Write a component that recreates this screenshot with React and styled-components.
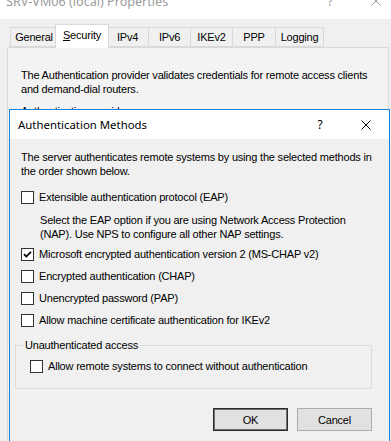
import React from "react";
import styled, { createGlobalStyle } from "styled-components";

const GlobalStyle = createGlobalStyle`
  html, body { margin: 0; padding: 0; background: #f0f0f0; overflow: hidden; }
  * { box-sizing: border-box; }
`;

const UI = `"Liberation Sans", Arial, sans-serif`;
const CAPTION = `"Noto Sans", "Open Sans", sans-serif`;

const Screen = styled.div`
  position: relative;
  width: 391px;
  height: 441px;
  overflow: hidden;
  background: #f0f0f0;
  font-family: ${UI};
  font-size: 11px;
  letter-spacing: -0.2px;
  color: #000;
`;

const BgWindow = styled.div`
  display: flex;
  flex-direction: column;
  height: 441px;
`;

const BgTitleBar = styled.div`
  display: flex;
  align-items: flex-start;
  height: 19px;
  background: #fff;
  padding-left: 6px;
  overflow: hidden;
`;

const TitleText = styled.div`
  font-family: ${CAPTION};
  font-size: ${(p) => p.$size || 11.5}px;
  letter-spacing: 0;
  line-height: 14px;
  color: ${(p) => (p.$inactive ? "#9b9b9b" : "#000")};
  margin-top: ${(p) => p.$offset || 0}px;
  white-space: nowrap;
`;

const Captions = styled.div`
  display: flex;
  margin-left: auto;
  margin-right: ${(p) => p.$right || 0}px;
  margin-top: ${(p) => p.$offset || 0}px;
  height: ${(p) => p.$height}px;
`;

const CaptionButton = styled.div`
  width: 46px;
  height: 100%;
  display: flex;
  align-items: center;
  justify-content: center;
  font-family: ${CAPTION};
  font-size: 12px;
  color: ${(p) => (p.$inactive ? "#9b9b9b" : "#000")};
`;

const TabStrip = styled.div`
  display: flex;
  align-items: flex-end;
  height: 23px;
  margin-top: 5px;
  padding-left: 10px;
  position: relative;
  z-index: 2;
`;

const Tab = styled.div`
  flex: 0 0 ${(p) => p.$w}px;
  height: ${(p) => (p.$active ? 24 : 20)}px;
  margin-left: ${(p) => p.$ml ?? -1}px;
  margin-bottom: ${(p) => (p.$active ? -1 : 0)}px;
  border: 1px solid #d9d9d9;
  border-bottom: ${(p) => (p.$active ? "none" : "1px solid #d9d9d9")};
  background: ${(p) => (p.$active ? "#fff" : "#f0f0f0")};
  position: relative;
  z-index: ${(p) => (p.$active ? 2 : 1)};
  display: flex;
  align-items: center;
  justify-content: center;
  padding-bottom: ${(p) => (p.$active ? 3 : 0)}px;
  line-height: 14px;
  white-space: nowrap;
`;

const Panel = styled.div`
  flex: 1;
  margin-left: 7px;
  width: 382px;
  border: 1px solid #d9d9d9;
  border-bottom: none;
  background: #f3f3f3;
  padding: 20px 0 0 13px;
  line-height: 14px;
  white-space: nowrap;
`;

const PanelLabel = styled.div`
  margin-top: 8px;
`;

const Dialog = styled.div`
  position: absolute;
  left: 9px;
  top: 109px;
  width: 381px;
  height: 345px;
  border: 1px solid #1c84d6;
  background: #f0f0f0;
  z-index: 5;
  display: flex;
  flex-direction: column;
`;

const DialogTitleBar = styled.div`
  display: flex;
  align-items: center;
  height: 29px;
  background: #fff;
  padding-left: 8px;
`;

const DialogBody = styled.div`
  padding: 11px 17px 0 11px;
  line-height: 14px;
  white-space: nowrap;
`;

const Para = styled.div`
  margin-top: ${(p) => p.$mt || 0}px;
  margin-left: ${(p) => p.$ml || 0}px;
`;

const CheckRow = styled.div`
  display: flex;
  align-items: center;
  gap: 5px;
  height: 14px;
  margin-top: ${(p) => p.$mt || 0}px;
`;

const Box = styled.div`
  flex: 0 0 13px;
  width: 13px;
  height: 13px;
  border: 1px solid #333;
  background: #fff;
  display: flex;
`;

const GroupBox = styled.fieldset`
  margin: 11px 0 0 -6px;
  padding: 0 0 15px 0;
  border: 1px solid #dcdcdc;
  min-width: 0;
`;

const GroupLegend = styled.legend`
  margin-left: 7px;
  padding: 0 2px;
  line-height: 14px;
`;

const GroupContent = styled.div`
  padding: 7px 0 0 14px;
`;

const ButtonRow = styled.div`
  display: flex;
  justify-content: flex-end;
  gap: 9px;
  margin-top: 19px;
`;

const Button = styled.div`
  width: 75px;
  height: 23px;
  display: flex;
  align-items: center;
  justify-content: center;
  background: #e1e1e1;
  border: 1px solid ${(p) => (p.$default ? "#2b2b2b" : "#adadad")};
  box-shadow: ${(p) => (p.$default ? "inset 0 0 0 1px #6e6e6e" : "none")};
`;

const CloseGlyph = ({ color }) => (
  <svg width="10" height="10" viewBox="0 0 10 10">
    <path d="M0.5 0.5 L9.5 9.5 M9.5 0.5 L0.5 9.5" stroke={color} strokeWidth="1" fill="none" />
  </svg>
);

const Checkbox = ({ checked }) => (
  <Box>
    {checked && (
      <svg width="11" height="11" viewBox="0 0 11 11">
        <path d="M2 5.2 L4.3 7.6 L9 2.8" stroke="#000" strokeWidth="1.7" fill="none" />
      </svg>
    )}
  </Box>
);

const tabs = [
  { label: "General", w: 48, ml: 0 },
  { label: "Security", w: 54, ml: -3, active: true },
  { label: "IPv4", w: 43, ml: -3 },
  { label: "IPv6", w: 43 },
  { label: "IKEv2", w: 43 },
  { label: "PPP", w: 44 },
  { label: "Logging", w: 49 },
];

export default function App() {
  return (
    <>
      <GlobalStyle />
      <Screen>
        <BgWindow>
          <BgTitleBar>
            <TitleText $inactive $size={12.6} $offset={-5}>SRV-VM06 (local) Properties</TitleText>
            <Captions $right={-8} $offset={-5} $height={12}>
              <CaptionButton $inactive>?</CaptionButton>
              <CaptionButton $inactive>
                <CloseGlyph color="#9b9b9b" />
              </CaptionButton>
            </Captions>
          </BgTitleBar>
          <TabStrip>
            {tabs.map((t) => (
              <Tab key={t.label} $w={t.w} $ml={t.ml} $active={t.active}>
                {t.label === "Security" ? (
                  <span>
                    <u>S</u>ecurity
                  </span>
                ) : (
                  t.label
                )}
              </Tab>
            ))}
          </TabStrip>
          <Panel>
            <div>
              The Authentication provider validates credentials for remote access clients
              <br />
              and demand-dial routers.
            </div>
            <PanelLabel>Authentication provider:</PanelLabel>
          </Panel>
        </BgWindow>

        <Dialog>
          <DialogTitleBar>
            <TitleText $size={11.4}>Authentication Methods</TitleText>
            <Captions $height={29}>
              <CaptionButton>?</CaptionButton>
              <CaptionButton>
                <CloseGlyph color="#000" />
              </CaptionButton>
            </Captions>
          </DialogTitleBar>
          <DialogBody>
            <Para>
              The server authenticates remote systems by using the selected methods in
              <br />
              the order shown below.
            </Para>
            <CheckRow $mt={12}>
              <Checkbox />
              <span>Extensible authentication protocol (EAP)</span>
            </CheckRow>
            <Para $mt={9} $ml={19}>
              Select the EAP option if you are using Network Access Protection
              <br />
              (NAP). Use NPS to configure all other NAP settings.
            </Para>
            <CheckRow $mt={6}>
              <Checkbox checked />
              <span>Microsoft encrypted authentication version 2 (MS-CHAP v2)</span>
            </CheckRow>
            <CheckRow $mt={8}>
              <Checkbox />
              <span>Encrypted authentication (CHAP)</span>
            </CheckRow>
            <CheckRow $mt={8}>
              <Checkbox />
              <span>Unencrypted password (PAP)</span>
            </CheckRow>
            <CheckRow $mt={8}>
              <Checkbox />
              <span>Allow machine certificate authentication for IKEv2</span>
            </CheckRow>
            <GroupBox>
              <GroupLegend>Unauthenticated access</GroupLegend>
              <GroupContent>
                <CheckRow>
                  <Checkbox />
                  <span>Allow remote systems to connect without authentication</span>
                </CheckRow>
              </GroupContent>
            </GroupBox>
            <ButtonRow>
              <Button $default>OK</Button>
              <Button>Cancel</Button>
            </ButtonRow>
          </DialogBody>
        </Dialog>
      </Screen>
    </>
  );
}
